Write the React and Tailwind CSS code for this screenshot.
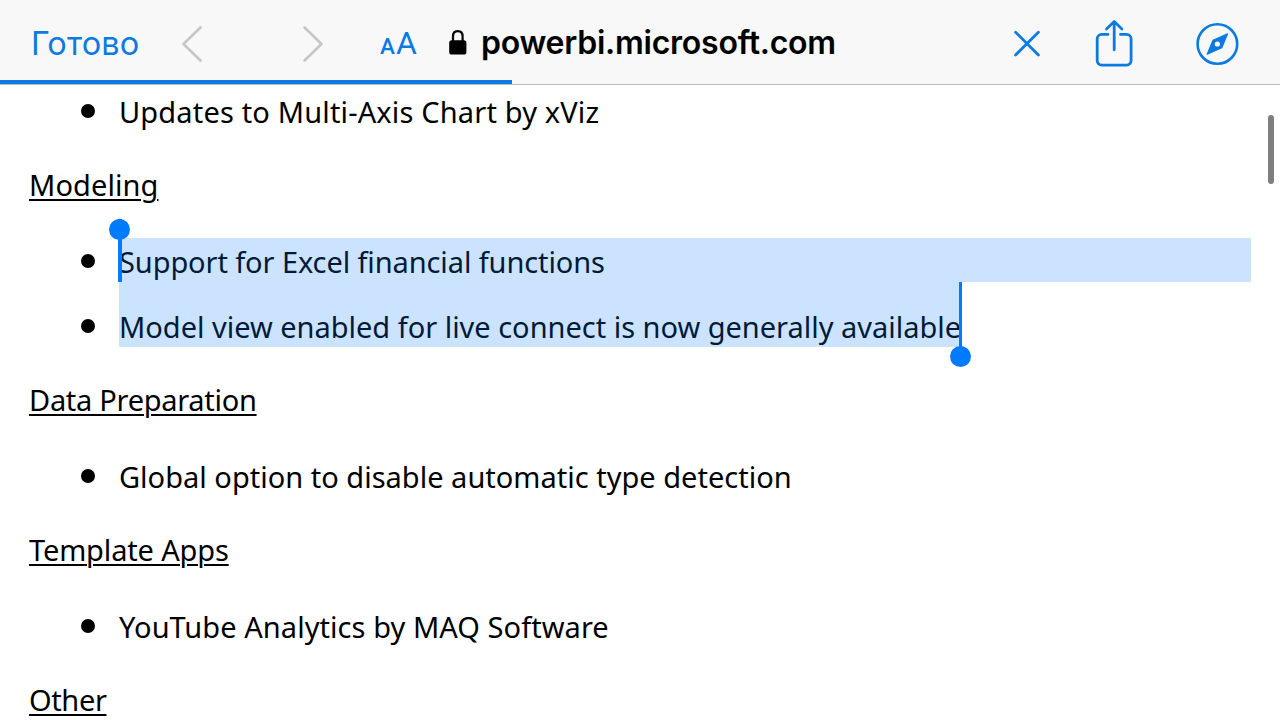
import React from 'react';

const sections = [
    {
        items: [{ text: 'Updates to Multi-Axis Chart by xViz', tracking: 'tracking-[0.16px]' }]
    },
    {
        title: 'Modeling',
        tracking: 'tracking-[0.09px]',
        selected: true,
        items: [
            { text: 'Support for Excel financial functions', tracking: 'tracking-[-0.1px]' },
            { text: 'Model view enabled for live connect is now generally available', tracking: 'tracking-[-0.015px]' }
        ]
    },
    {
        title: 'Data Preparation',
        tracking: 'tracking-[-0.29px]',
        items: [{ text: 'Global option to disable automatic type detection', tracking: 'tracking-[0.01px]' }]
    },
    {
        title: 'Template Apps',
        tracking: 'tracking-[-0.15px]',
        items: [{ text: 'YouTube Analytics by MAQ Software', tracking: 'tracking-[0.06px]' }]
    },
    { title: 'Other', tracking: 'tracking-[-0.38px]', items: [] }
];

const Chevron = ({ className, d }) => (
    <svg className={className} width="22" height="38" viewBox="0 0 22 38" fill="none" stroke="#c6c6c6" strokeWidth="2.6" strokeLinecap="round" strokeLinejoin="round">
        <path d={d} />
    </svg>
);

const LockIcon = () => (
    <svg className="ml-[32px]" width="20" height="28" viewBox="0 0 20 28">
        <path d="M5 13V8.5C5 5.2 6.9 3.2 9.8 3.2s4.8 2 4.8 5.3V13" fill="none" stroke="#000" strokeWidth="2.2" />
        <rect x="1.2" y="12.2" width="17.2" height="14.4" rx="2.6" />
    </svg>
);

const CloseIcon = () => (
    <svg width="28" height="28" viewBox="0 0 28 28" fill="none" stroke="#0b7be2" strokeWidth="2.8" strokeLinecap="round">
        <path d="M2.6 2.2 25.4 25M25.4 2.2 2.6 25" />
    </svg>
);

const ShareIcon = () => (
    <svg className="ml-[53px]" width="40" height="50" viewBox="0 0 40 50" fill="none" stroke="#0b7be2" strokeWidth="2.8" strokeLinecap="round" strokeLinejoin="round">
        <path d="M14 15.4H7.7a4.5 4.5 0 0 0-4.5 4.5V41.6a4.5 4.5 0 0 0 4.5 4.5H32.6a4.5 4.5 0 0 0 4.5-4.5V19.9a4.5 4.5 0 0 0-4.5-4.5H26.5" />
        <path d="M20.2 30.8V2.6M12.5 10 20.2 2.6l7.7 7.4" />
    </svg>
);

const CompassIcon = () => (
    <svg className="ml-[61px]" width="44" height="44" viewBox="0 0 44 44">
        <circle cx="22.4" cy="22" r="19.8" fill="none" stroke="#0b7be2" strokeWidth="2.6" />
        <path fill="#0b7be2" stroke="#0b7be2" strokeWidth="1.2" strokeLinejoin="round" d="M32.6 11.8 26.8 25.8 12.2 32.2 18 18.2Z" />
        <circle cx="22.4" cy="22" r="2.6" fill="#f8f8f8" />
    </svg>
);

const Toolbar = () => (
    <header className="relative flex items-center w-full h-[85px] shrink-0 bg-[#f8f8f8] border-b border-[#b9b9b9] font-['Inter',sans-serif]">
        <button className="ml-[31px] w-[110px] mt-1 text-left text-[32.5px] leading-10 tracking-[0.1px] text-[#0b7be2]">Готово</button>
        <Chevron className="ml-[40px] mt-[3px]" d="M19.5 2.5 2.5 19l17 16.5" />
        <Chevron className="ml-[99px] mt-[3px]" d="M2.5 2.5 19.5 19l-17 16.5" />
        <button className="flex items-baseline gap-px ml-[56px] w-[36px] mt-[5px] font-['Roboto',sans-serif] leading-10 text-[#0b7be2]">
            <span className="text-[22.5px] font-medium">A</span>
            <span className="text-[32px]">A</span>
        </button>
        <LockIcon />
        <div className="ml-[13px] mt-px text-[32px] leading-10 font-semibold tracking-[-0.25px] text-black">powerbi.microsoft.com</div>
        <div className="flex items-center ml-auto mr-[41px] mt-[3px]">
            <CloseIcon />
            <ShareIcon />
            <CompassIcon />
        </div>
        <div className="absolute left-0 bottom-0 w-2/5 h-[4px] bg-[#0b7be2]" />
    </header>
);

const StartHandle = () => (
    <span className="absolute -left-px -top-[19px] w-[4px] h-[63px] bg-[#007aff]">
        <span className="absolute -left-[9px] top-0 size-[21px] rounded-full bg-[#007aff]" />
    </span>
);

const EndHandle = () => (
    <span className="absolute -right-[2px] top-0 w-[3.5px] h-[74px] bg-[#007aff]">
        <span className="absolute -left-[9px] bottom-[-11px] size-[21px] rounded-full bg-[#007aff]" />
    </span>
);

const Item = ({ item, box, children }) => (
    <li className="flex items-end">
        <span className="mb-[14px] size-[14px] shrink-0 mr-[24px] rounded-full bg-black" />
        <div className={`relative ${box}`}>
            <span className={`block h-11 ${item.tracking}`}>{item.text}</span>
            {children}
        </div>
    </li>
);

const Section = ({ section }) => {
    const { title, tracking, selected, items } = section;
    return (
        <section>
            {title && (
                <h2 className={`h-11 underline decoration-2 underline-offset-[3px] ${tracking}`}>{title}</h2>
            )}
            {items.length > 0 && (
                <ul className={`pl-[52px] mb-[29px] ${title ? 'mt-[33px]' : ''}`}>
                    {selected ? (
                        <>
                            <Item item={items[0]} box="flex-1 bg-[#cce3ff] text-[#001a38]">
                                <StartHandle />
                            </Item>
                            <Item item={items[1]} box="w-[841px] pt-[21px] bg-[#cce3ff] text-[#001a38] whitespace-nowrap">
                                <EndHandle />
                            </Item>
                        </>
                    ) : (
                        items.map((item) => <Item key={item.text} item={item} box="flex-1" />)
                    )}
                </ul>
            )}
        </section>
    );
};

const App = () => {
    return (
        <div className="relative flex flex-col w-full h-screen overflow-hidden bg-white">
            <Toolbar />
            <main className="flex-1 min-h-0 overflow-hidden pl-[29px] pr-[29px] pt-[3px] font-['Noto_Sans',sans-serif] text-[29px] leading-[47px] text-black">
                {sections.map((section, i) => (
                    <Section key={i} section={section} />
                ))}
            </main>
            <div className="absolute right-[6px] top-[115px] w-[6px] h-[69px] rounded-full bg-[#7f7f7f]" />
        </div>
    );
};

export default App;
